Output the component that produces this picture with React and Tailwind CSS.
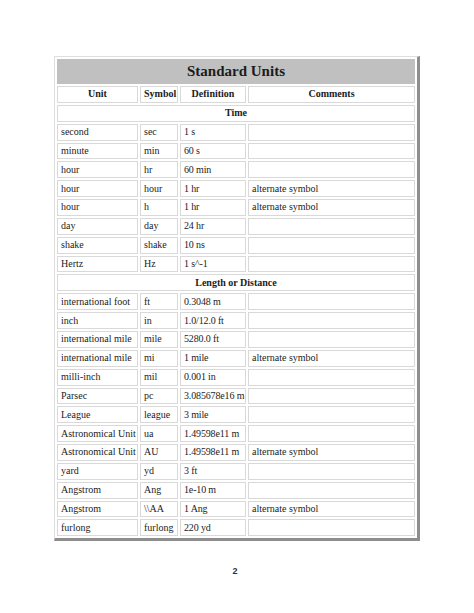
import React from "react";

const time = [
    ["second", "sec", "1 s", ""],
    ["minute", "min", "60 s", ""],
    ["hour", "hr", "60 min", ""],
    ["hour", "hour", "1 hr", "alternate symbol"],
    ["hour", "h", "1 hr", "alternate symbol"],
    ["day", "day", "24 hr", ""],
    ["shake", "shake", "10 ns", ""],
    ["Hertz", "Hz", "1 s^-1", ""],
];

const length = [
    ["international foot", "ft", "0.3048 m", ""],
    ["inch", "in", "1.0/12.0 ft", ""],
    ["international mile", "mile", "5280.0 ft", ""],
    ["international mile", "mi", "1 mile", "alternate symbol"],
    ["milli-inch", "mil", "0.001 in", ""],
    ["Parsec", "pc", "3.085678e16 m", ""],
    ["League", "league", "3 mile", ""],
    ["Astronomical Unit", "ua", "1.49598e11 m", ""],
    ["Astronomical Unit", "AU", "1.49598e11 m", "alternate symbol"],
    ["yard", "yd", "3 ft", ""],
    ["Angstrom", "Ang", "1e-10 m", ""],
    ["Angstrom", "\\\\AA", "1 Ang", "alternate symbol"],
    ["furlong", "furlong", "220 yd", ""],
];

const cell = "border border-[#d9d9d9] h-[16.85px] px-[3px] py-0 leading-none align-middle whitespace-nowrap";

const Section = ({ title, rows }) => (
    <>
        <tr>
            <td colSpan={4} className={cell + " text-center font-bold"}>{title}</td>
        </tr>
        {rows.map((r, i) => (
            <tr key={i}>
                {r.map((c, j) => (
                    <td key={j} className={cell + (j === 2 ? " tracking-[-0.15px]" : "")}>{c}</td>
                ))}
            </tr>
        ))}
    </>
);

export default function App() {
    return (
        <div className="w-[474px] h-[613px] bg-white pt-[56px] text-[#1c1c1c]">
            <table
                className="ml-[54px] w-[366px] table-fixed border-separate border-spacing-[2px] border-t border-l border-t-[#dedede] border-l-[#dedede] border-r-[3px] border-b-[3px] border-r-[#8e8e8e] border-b-[#8e8e8e] text-[10px]"
                style={{ fontFamily: '"Liberation Serif", "Times New Roman", serif' }}
            >
                <colgroup>
                    <col className="w-[81px]" />
                    <col className="w-[38px]" />
                    <col className="w-[66px]" />
                    <col />
                </colgroup>
                <tbody>
                    <tr>
                        <td colSpan={4} className="h-[25px] bg-[#c0c0c0] border border-[#c0c0c0] text-center font-bold text-[15px] leading-none">
                            Standard Units
                        </td>
                    </tr>
                    <tr>
                        <td className={cell + " text-center font-bold"}>Unit</td>
                        <td className={cell + " text-center font-bold"}>Symbol</td>
                        <td className={cell + " text-center font-bold"}>Definition</td>
                        <td className={cell + " text-center font-bold"}>Comments</td>
                    </tr>
                    <Section title="Time" rows={time} />
                    <Section title="Length or Distance" rows={length} />
                </tbody>
            </table>
            <div
                className="mt-[24px] text-center text-[9px] font-bold text-[#333] pr-[4px]"
                style={{ fontFamily: '"Liberation Sans", Arial, sans-serif' }}
            >
                2
            </div>
        </div>
    );
}
